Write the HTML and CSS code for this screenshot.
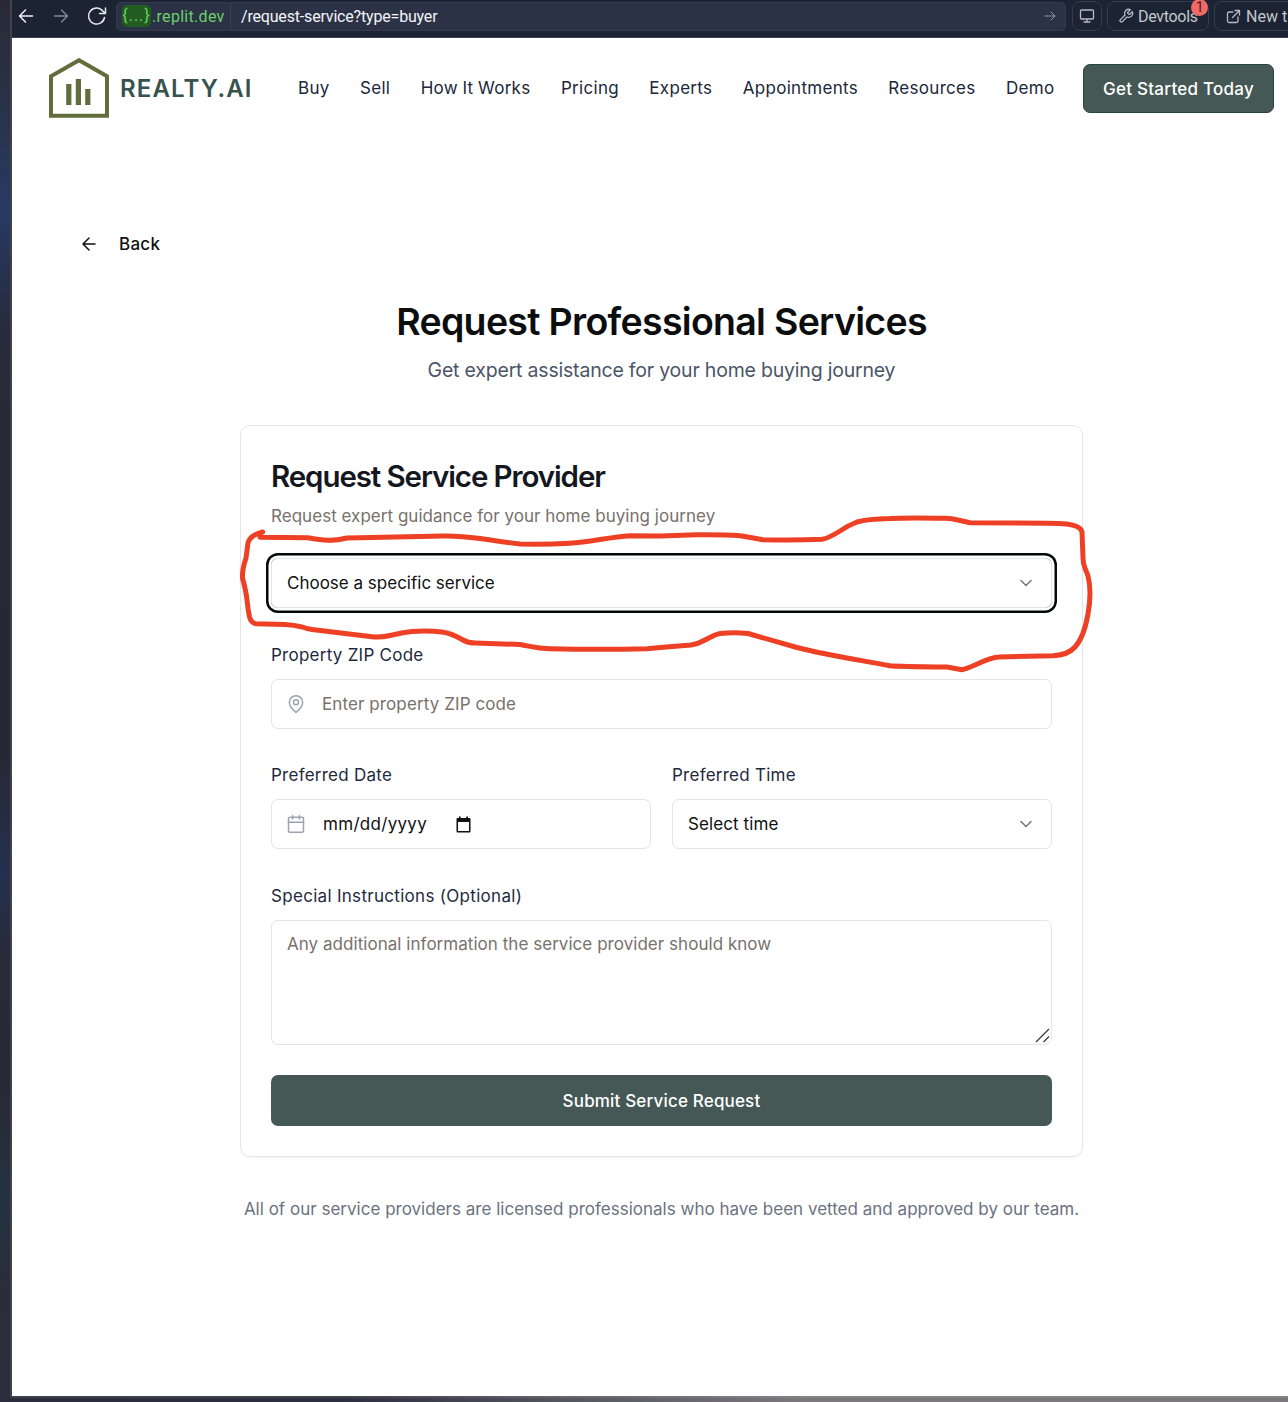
FILE: index.html
```html
<!DOCTYPE html>
<html lang="en">
<head>
<meta charset="utf-8">
<title>Request Professional Services</title>
<link rel="stylesheet" href="styles.css">
</head>
<body>
<div class="window">
  <div class="toolbar">
    <svg class="tool-back" width="16" height="16" viewBox="0 0 16 16"><path d="M14.500 8H1.500M7.500 2L1.500 8l6 6"/></svg>
    <svg class="tool-forward" width="16" height="16" viewBox="0 0 16 16"><path d="M1.500 8h13M8.500 2l6 6-6 6"/></svg>
    <svg class="tool-reload" width="20" height="18" viewBox="0 0 20 18"><path d="M17.500 10.500A8 8 0 1 1 16 4.200L18.500 6.500M18.500 1v5.500h-6"/></svg>
    <div class="address">
      <div class="host"><span class="chip">{...}</span><span class="domain">.replit.dev</span></div>
      <div class="path">/request-service?type=buyer</div>
      <svg class="go" width="12" height="12" viewBox="0 0 12 12"><path d="M1 6h10M7 2l4 4-4 4"/></svg>
    </div>
    <div class="tool-button screen"><svg width="16" height="16" viewBox="0 0 16 16"><path d="M2.500 2h11q1 0 1 1v7q0 1-1 1h-11q-1 0-1-1V3q0-1 1-1zM8 11v3M5 14h6"/></svg></div>
    <div class="tool-button devtools"><svg width="16" height="16" viewBox="0 0 24 24"><path d="M14.700 6.300a1 1 0 0 0 0 1.400l1.600 1.600a1 1 0 0 0 1.400 0l3.770-3.770a6 6 0 0 1-7.940 7.940l-6.910 6.910a2.120 2.120 0 0 1-3-3l6.910-6.910a6 6 0 0 1 7.940-7.940z" stroke-width="1.900"/></svg><span>Devtools</span><span class="badge">1</span></div>
    <div class="tool-button newtab"><svg width="15" height="15" viewBox="0 0 15 15"><path d="M7 3H3Q1.500 3 1.500 4.500V12Q1.500 13.500 3 13.500h7.500q1.500 0 1.500-1.500V8M9 1.500h4.500V6M13.500 1.500L6.500 8.500"/></svg><span>New tab</span></div>
  </div>
  <div class="page">
    <header class="header">
      <svg class="logo" width="60" height="60" viewBox="0 0 60 60"><path class="logo-house" d="M2 18.200L30 2.200l28 16V57.800H2z"/><path class="logo-bars" d="M17.200 26h5.200v21h-5.200zM26.800 21H32v26h-5.200zM36.200 31h5.200v16h-5.200z"/></svg>
      <span class="brand">REALTY.AI</span>
      <nav class="nav"><a>Buy</a><a>Sell</a><a>How It Works</a><a>Pricing</a><a>Experts</a><a>Appointments</a><a>Resources</a><a>Demo</a></nav>
      <div class="cta">Get Started Today</div>
    </header>
    <main class="main">
      <div class="back"><svg width="16" height="16" viewBox="0 0 16 16"><path d="M14 8H2M8 2L2 8l6 6"/></svg><span>Back</span></div>
      <h1>Request Professional Services</h1>
      <p class="lead">Get expert assistance for your home buying journey</p>
      <form class="card">
        <h2>Request Service Provider</h2>
        <p class="sub">Request expert guidance for your home buying journey</p>
        <div class="field select focused"><span>Choose a specific service</span><svg class="chevron" width="20" height="20" viewBox="0 0 24 24"><path d="M6 9l6 6 6-6"/></svg></div>
        <div class="group">
          <label>Property ZIP Code</label>
          <div class="field"><svg class="lead-icon" width="20" height="20" viewBox="0 0 24 24"><path d="M20 10c0 6-8 12-8 12s-8-6-8-12a8 8 0 0 1 16 0z"/><circle cx="12" cy="10" r="3"/></svg><span class="placeholder zip">Enter property ZIP code</span></div>
        </div>
        <div class="columns">
          <div class="group">
            <label>Preferred Date</label>
            <div class="field"><svg class="lead-icon" width="20" height="20" viewBox="0 0 24 24"><rect x="3" y="4" width="18" height="18" rx="2"/><path d="M16 2v4M8 2v4M3 10h18"/></svg><span class="date">mm/dd/yyyy</span><svg class="picker" width="15" height="17" viewBox="0 0 15 17"><path d="M1.500 2H3V.500h1.700V2h5.600V.500H12V2h1.500q1 0 1 1v12.500q0 1-1 1h-12q-1 0-1-1V3q0-1 1-1zM2 6v9h11V6z" fill-rule="evenodd"/></svg></div>
          </div>
          <div class="group">
            <label>Preferred Time</label>
            <div class="field select"><span class="time">Select time</span><svg class="chevron" width="20" height="20" viewBox="0 0 24 24"><path d="M6 9l6 6 6-6"/></svg></div>
          </div>
        </div>
        <div class="group">
          <label class="wide">Special Instructions (Optional)</label>
          <div class="field notes"><span class="placeholder">Any additional information the service provider should know</span><svg class="grip" width="15" height="15" viewBox="0 0 15 15"><path d="M1 14L14 1M8.500 14L14 8.500"/></svg></div>
        </div>
        <div class="submit">Submit Service Request</div>
      </form>
      <p class="foot">All of our service providers are licensed professionals who have been vetted and approved by our team.</p>
    </main>
  </div>
</div>
<svg class="markup" width="860" height="160" viewBox="236 514 860 160"><path d="M262.700 532Q256 534 253 536Q249 539 248 543Q247 551 246 558Q242 570 242.500 578Q246 591 247 600Q248 610 249.500 617Q251 623 256 623.700L285 624.500Q294 625 302 627Q308 629 312 629.500L370 636.500Q380 638 390 635.500Q405 632 412 631.500Q428 630.500 442 632Q451 633 463 640Q468 643 475 643L520 644.500C530 646 535 648.500 550 648.700Q600 650 647 648.700L660 647.500L691 645Q698 644 705 640Q716 634 720 633.500Q734 632 748 633.500L797 647.500C830 656 860 660 890 665.700Q897 666.500 947 667L962 669.700Q966 669 975 665Q992 657 999 657L1053 655.700Q1068 655 1075 647Q1084 637 1088 614Q1092 592 1088 576C1085 567 1083 567 1083 558L1082 532Q1081 526 1066.700 524Q1060 523.300 1047 523.300L970 522.700L958 520Q952 518.500 945 518.300Q907 517.500 890 518.500Q867 519 857 522Q849 525 840 531Q828 538.500 822 539.300Q795 540.500 763 539.700L742 536Q734 534.500 697 534.700L660 536L630 535.700C610 537 590 542 570 543.300Q545 544.500 520 544Q510 543 480 538.500Q458 535.500 443 536L347 538Q336 540.500 328 540.300Q320 540 308 537.700L260 537.300"/></svg>
</body>
</html>
```
FILE: styles.css
```css
* { box-sizing: border-box; }
body {
  margin: 0;
  width: 1288px;
  height: 1402px;
  overflow: hidden;
  position: relative;
  font-family: Inter, "Liberation Sans", sans-serif;
  font-size: 17px;
  background:
    linear-gradient(90deg, #2b2d3c 0, #2c2f3f 340px, #555560 560px, #7a787b 800px) 0 1396px / 100% 6px no-repeat,
    linear-gradient(180deg, #282935 0, #293349 110px, #283963 210px, #272c3c 330px, #282935 420px, #272834 750px, #24304e 876px, #282a37 960px, #282935 1080px, #23323f 1198px, #2a2c3a 1290px, #2b2d3c 1396px);
}
svg { flex: none; fill: none; }
h1, h2, p { margin: 0; white-space: nowrap; }
.window {
  margin-left: 10px;
  width: 1278px;
  height: 1398px;
  border-left: 2px solid #3f414d;
  border-bottom: 2px solid;
  border-image: linear-gradient(90deg, #3f414d 0, #41424e 340px, #666570 560px, #858386 800px) 2;
  overflow: hidden;
  background: #fff;
}
.toolbar {
  display: flex;
  align-items: center;
  width: 1330px;
  height: 38px;
  padding: 0 0 5px 6px;
  background: #1c2333;
  border-bottom: 1px solid #3c4150;
  color: #c2c8cc;
  font-family: Roboto, "Liberation Sans", sans-serif;
  font-size: 16px;
}
.toolbar svg { stroke: #b5bbc4; stroke-width: 1.3; stroke-linecap: round; stroke-linejoin: round; }
.toolbar .tool-back { stroke: #f0f2f5; stroke-width: 1.5; }
.toolbar .tool-forward { margin-left: 19px; stroke: #858b9a; }
.toolbar .tool-reload { margin-left: 18px; stroke: #e4e7ec; stroke-width: 1.5; }
.address {
  display: flex;
  flex: none;
  align-items: center;
  width: 950px;
  height: 29px;
  margin-left: 9px;
  background: #2b3245;
  border: 1px solid #343b4e;
  border-radius: 5px;
}
.host {
  display: flex;
  align-items: center;
  width: 114px;
  height: 27px;
  padding-left: 5px;
  border-right: 1px solid #3a4155;
  color: #6cd069;
}
.chip { width: 29px; height: 22px; line-height: 21px; text-align: center; background: #225c20; border-radius: 5px; letter-spacing: 1px; }
.domain { margin-left: 1px; letter-spacing: .3px; }
.path { margin-left: 10px; color: #f2f4f8; letter-spacing: -.18px; }
.address .go { margin-left: auto; margin-right: 9px; stroke: #9298a6; stroke-width: 1; }
.tool-button {
  display: flex;
  flex: none;
  align-items: center;
  height: 30px;
  margin-left: 6px;
  border: 1px solid #343b4d;
  border-radius: 8px;
  position: relative;
  white-space: nowrap;
}
.screen { width: 30px; padding-left: 6px; }
.devtools { width: 102px; padding-left: 10px; gap: 4px; margin-left: 5px; letter-spacing: -.3px; }
.newtab { width: 110px; padding-left: 11px; gap: 5px; margin-left: 5px; }
.badge {
  position: absolute;
  right: 0;
  top: -3px;
  width: 17px;
  height: 17px;
  line-height: 17px;
  border-radius: 50%;
  background: #ef6a67;
  color: #4d1717;
  font-size: 14px;
  text-align: center;
}
.page { width: 1299px; }
.header { display: flex; align-items: center; height: 101px; padding-left: 37px; color: #1c2739; }
.logo { margin-bottom: 2px; }
.logo-house { stroke: #636d3b; stroke-width: 4; }
.logo-bars { fill: #636d3b; }
.brand { width: 133px; margin-left: 11px; color: #36534e; font-size: 24px; font-weight: 600; letter-spacing: 1.1px; white-space: nowrap; }
.nav { display: flex; gap: 30.4px; margin-left: 45px; margin-bottom: 1px; letter-spacing: .3px; word-spacing: -.6px; white-space: nowrap; }
.cta {
  display: flex;
  align-items: center;
  justify-content: center;
  width: 191px;
  height: 49px;
  margin-left: auto;
  margin-right: 37px;
  border: 1px solid #24463f;
  border-radius: 7px;
  background: #455855;
  color: #fff;
  font-weight: 500;
  letter-spacing: .25px;
}
.main { display: flex; flex-direction: column; align-items: center; padding-top: 92px; }
.back { display: flex; align-items: center; align-self: flex-start; gap: 22px; height: 26px; margin-left: 69px; color: #111; font-weight: 500; letter-spacing: .25px; }
.back svg { stroke: #111; stroke-width: 1.5; stroke-linecap: round; stroke-linejoin: round; }
h1 { height: 48px; margin-top: 41px; line-height: 48px; color: #0c0d0f; font-size: 37.5px; font-weight: 600; letter-spacing: -.7px; }
.lead { height: 30px; margin-top: 9px; line-height: 30px; color: #4a5667; font-size: 19.5px; letter-spacing: -.2px; }
.card {
  display: flex;
  flex-direction: column;
  width: 843px;
  height: 732px;
  margin-top: 40px;
  padding: 30px;
  border: 1px solid #e5e5e5;
  border-radius: 10px;
  box-shadow: 0 1px 2px #0000000a;
}
h2 { height: 40px; line-height: 40px; color: #15171f; font-size: 29.5px; font-weight: 600; letter-spacing: -1.1px; }
.sub { height: 25px; margin-top: 8px; line-height: 25px; color: #78716c; letter-spacing: .03px; }
.field {
  display: flex;
  align-items: center;
  height: 50px;
  border: 1px solid #e5e5e5;
  border-radius: 7px;
  padding: 0 15px;
  color: #111;
  white-space: nowrap;
}
.focused { margin: 29px 0 21px; box-shadow: 0 0 0 2.500px #fff, 0 0 0 5px #050709; }
.select { justify-content: space-between; }
.chevron { stroke: #777; stroke-width: 1.8; stroke-linecap: round; stroke-linejoin: round; }
.group { display: flex; flex-direction: column; }
.group label { height: 50px; line-height: 52px; color: #1f2a3e; letter-spacing: .25px; white-space: nowrap; }
.group .wide { letter-spacing: .3px; }
.lead-icon { margin-left: -1px; stroke: #9ca3af; stroke-width: 1.8; stroke-linecap: round; stroke-linejoin: round; }
.placeholder { color: #78716c; letter-spacing: .04px; }
.zip { margin-left: 16px; letter-spacing: .1px; }
.date { width: 133px; margin-left: 17px; letter-spacing: .3px; }
.time { letter-spacing: .1px; }
.picker { fill: #111; }
.columns { display: grid; grid-template-columns: 380px 380px; gap: 21px; margin: 20px 0 21px; }
.notes { height: 125px; align-items: flex-start; padding-top: 11px; position: relative; line-height: 24px; }
.grip { position: absolute; right: 1px; bottom: 1px; stroke: #333; stroke-width: 1.2; }
.submit {
  display: flex;
  align-items: center;
  justify-content: center;
  height: 51px;
  margin-top: 30px;
  border-radius: 7px;
  background: #455855;
  color: #fff;
  font-weight: 500;
  letter-spacing: .17px;
}
.foot { height: 26px; margin-top: 39px; line-height: 26px; color: #6b7280; letter-spacing: .01px; }
.markup { position: absolute; left: 236px; top: 514px; stroke: #ed4025; stroke-width: 5; stroke-linecap: round; stroke-linejoin: round; }
```
